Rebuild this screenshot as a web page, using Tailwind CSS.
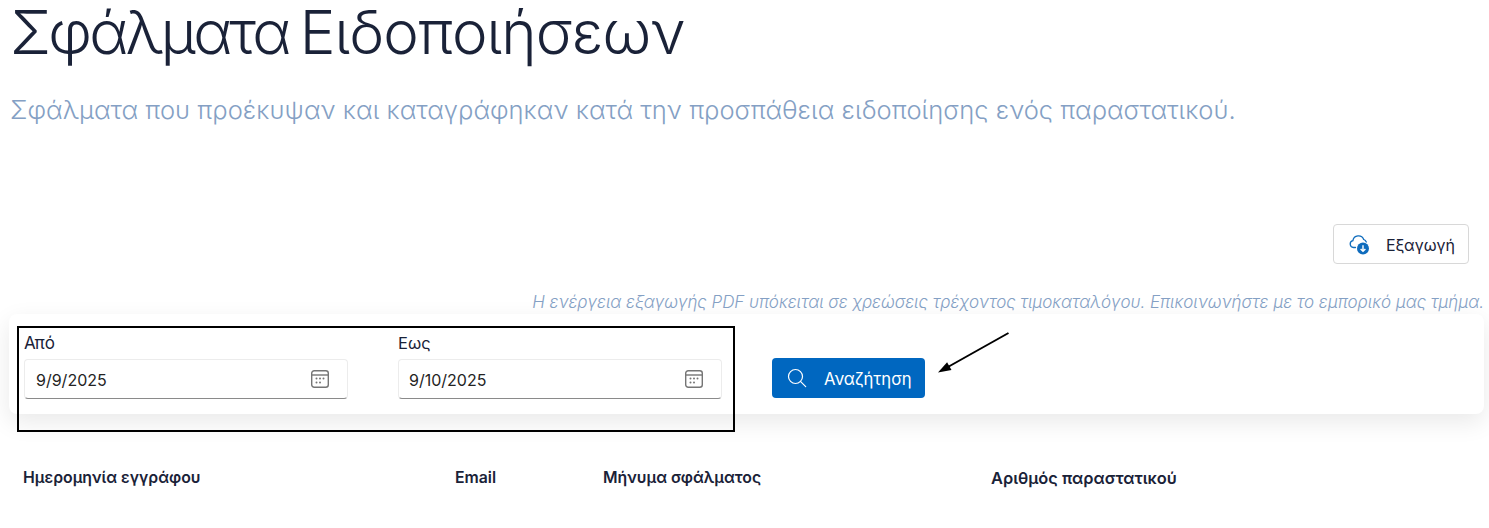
<!DOCTYPE html>
<html lang="el">
  <head>
    <meta charset="UTF-8" />
    <meta name="viewport" content="width=device-width, initial-scale=1.0" />
    <title>Σφάλματα Ειδοποιήσεων</title>
    <script src="https://cdn.jsdelivr.net/npm/@tailwindcss/browser@4"></script>
  </head>
  <body class="bg-white font-['Inter',sans-serif] h-[528px] overflow-hidden">
    <div class="relative h-[528px] overflow-hidden">
      <h1 class="pl-[10px] h-[68px] text-[60px] leading-[64px] font-[350] text-[#1a2238] tracking-[-1.5px] [word-spacing:-4px]"><span class="tracking-[-2.8px]">Σφάλματα</span> <span class="tracking-[-0.85px]">Ειδοποιήσεων</span></h1>
      <p class="pl-[10px] mt-[24px] h-[36px] text-[25.5px] leading-[36px] font-light text-[#84a0c4] whitespace-nowrap tracking-[0.03px]">Σφάλματα που προέκυψαν και καταγράφηκαν κατά την προσπάθεια ειδοποίησης ενός παραστατικού.</p>

      <div class="flex justify-end pr-[20px] mt-[96px]">
        <button class="flex items-center w-[136px] h-[40px] pl-[15px] bg-white border border-[#d8d8d8] rounded-[4px] text-[16px] text-[#1a2238]">
          <svg class="w-[22px] h-[22px]" viewBox="0 0 22 22" fill="none">
            <path d="M6.5 14.5H4.5a3.5 3.5 0 0 1-.6-6.9A5.6 5.6 0 0 1 14.7 6.5a4.6 4.6 0 0 1 2.6 2.5" stroke="#0f6cbd" stroke-width="1.3" stroke-linecap="round" />
            <circle cx="14" cy="15.5" r="6" fill="#0f6cbd" />
            <path d="M14 12.3v6M11.6 15.9 14 18.3l2.4-2.4" stroke="#fff" stroke-width="1.4" />
          </svg>
          <span class="ml-[15px] pt-[2px]">Εξαγωγή</span>
        </button>
      </div>

      <p class="mt-[27px] h-[22px] pr-[5px] text-right text-[17px] leading-[22px] italic font-light text-[#84a0c4] whitespace-nowrap tracking-[-0.035px]">Η ενέργεια εξαγωγής PDF υπόκειται σε χρεώσεις τρέχοντος τιμοκαταλόγου. Επικοινωνήστε με το εμπορικό μας τμήμα.</p>

      <div class="flex items-start ml-[9px] mr-[5px] mt-[1px] h-[100px] bg-white rounded-[8px] shadow-[0_8px_24px_rgba(0,0,0,0.09)] pl-[15px] pt-[17px]">
        <div class="w-[324px]">
          <label class="block h-[24px] text-[17px] leading-[24px] text-[#1a2238]">Από</label>
          <div class="mt-[4px] flex items-center justify-between h-[40px] pl-[11px] pr-[17px] pt-[2px] border border-[#ececec] border-b-[#8a8a8a] rounded-[4px] text-[16px] text-[#242424]">
            <span>9/9/2025</span>
            <svg class="w-[20px] h-[20px] -mt-[2px]" viewBox="0 0 20 20" fill="none">
              <rect x="1.7" y="1.7" width="16.6" height="16.6" rx="2.5" stroke="#757575" stroke-width="1.4" />
              <path d="M2 6h16" stroke="#757575" stroke-width="1.4" />
              <g fill="#757575"><circle cx="6.5" cy="9.5" r="1" /><circle cx="10" cy="9.5" r="1" /><circle cx="13.5" cy="9.5" r="1" /><circle cx="6.5" cy="13.5" r="1" /><circle cx="10" cy="13.5" r="1" /></g>
            </svg>
          </div>
        </div>
        <div class="w-[324px] ml-[50px]">
          <label class="block h-[24px] text-[16.5px] leading-[24px] text-[#1a2238]">Εως</label>
          <div class="mt-[4px] flex items-center justify-between h-[40px] pl-[10px] pr-[17px] pt-[2px] border border-[#ececec] border-b-[#8a8a8a] rounded-[4px] text-[16px] text-[#242424]">
            <span>9/10/2025</span>
            <svg class="w-[20px] h-[20px] -mt-[2px]" viewBox="0 0 20 20" fill="none">
              <rect x="1.7" y="1.7" width="16.6" height="16.6" rx="2.5" stroke="#757575" stroke-width="1.4" />
              <path d="M2 6h16" stroke="#757575" stroke-width="1.4" />
              <g fill="#757575"><circle cx="6.5" cy="9.5" r="1" /><circle cx="10" cy="9.5" r="1" /><circle cx="13.5" cy="9.5" r="1" /><circle cx="6.5" cy="13.5" r="1" /><circle cx="10" cy="13.5" r="1" /></g>
            </svg>
          </div>
        </div>
        <button class="flex items-center ml-[50px] mt-[27px] w-[153px] h-[40px] pl-[15px] bg-[#0067c0] rounded-[4px] text-[16.7px] text-white">
          <svg class="w-[20px] h-[20px] -mt-[1px]" viewBox="0 0 20 20" fill="none" stroke="#fff" stroke-width="1.2">
            <circle cx="8.5" cy="8.5" r="7" />
            <path d="m13.7 13.7 5 5" stroke-linecap="round" />
          </svg>
          <span class="ml-[17px] pt-[3px]">Αναζήτηση</span>
        </button>
      </div>

      <div class="grid grid-cols-[432px_148px_388px_1fr] pl-[23px] mt-[53px] text-[15.8px] leading-[22px] font-semibold text-[#1a2238]">
        <div>Ημερομηνία εγγράφου</div>
        <div>Email</div>
        <div>Μήνυμα σφάλματος</div>
        <div class="text-[16.4px]">Αριθμός παραστατικού</div>
      </div>

      <!-- annotation drawn over the screenshot -->
      <div class="absolute left-[17px] top-[326px] w-[718px] h-[106px] border-2 border-black"></div>
      <svg class="absolute left-[930px] top-[325px] w-[90px] h-[60px]" viewBox="0 0 90 60" fill="none">
        <path d="M78.5 8 17 42.5" stroke="#000" stroke-width="2" />
        <path d="M8 47.5 21.5 45 17.1 37.2Z" fill="#000" />
      </svg>
    </div>
  </body>
</html>
